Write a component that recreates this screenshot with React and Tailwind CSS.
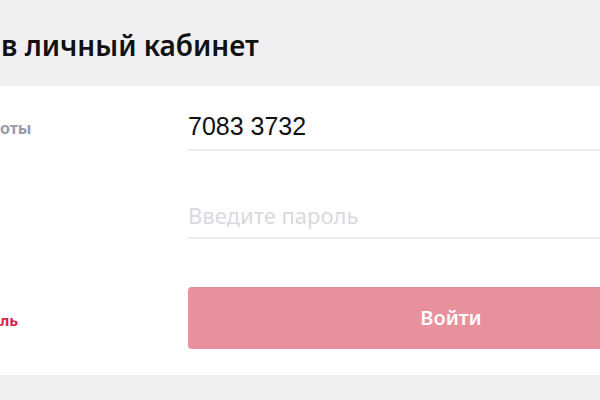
export default function App() {
  return (
    <div className="w-[600px] h-[400px] overflow-hidden bg-[#f0f0f2] flex flex-col" style={{ fontFamily: '"Noto Sans", "Liberation Sans", sans-serif' }}>
      <div className="h-[86px] shrink-0 flex items-center pt-[4px]">
        <span className="whitespace-nowrap text-[28px] font-semibold text-[#111111] pl-[1px]">в личный кабинет</span>
      </div>
      <div className="h-[289px] shrink-0 bg-white flex">
        <div className="w-[188px] shrink-0 flex flex-col">
          <div className="mt-[18px] h-[47px] flex items-center">
            <span className="whitespace-nowrap text-[16px] font-bold text-[#9b9ba6]">оты</span>
          </div>
          <div className="mt-[136px] h-[62px] flex items-center">
            <span className="whitespace-nowrap text-[15px] font-bold text-[#d7264c] pt-[4px]">ль</span>
          </div>
        </div>
        <div className="w-[526px] shrink-0 flex flex-col">
          <div className="mt-[18px] h-[47px] border-b-2 border-[#ececef] flex items-center">
            <span className="text-[25px] text-[#111111] leading-none" style={{ fontFamily: '"Liberation Sans", Arial, sans-serif' }}>7083 3732</span>
          </div>
          <div className="mt-[41px] h-[47px] border-b-2 border-[#ececef] flex items-center">
            <span className="text-[22px] text-[#d9d9de] leading-none">Введите пароль</span>
          </div>
          <div className="mt-[48px] h-[62px] rounded-[4px] bg-[#e8909b] flex items-center justify-center">
            <span className="text-[20px] font-semibold text-white">Войти</span>
          </div>
        </div>
      </div>
    </div>
  );
}
